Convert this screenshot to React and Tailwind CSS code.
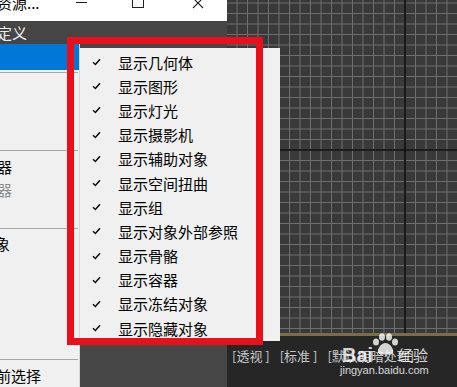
import React from 'react';

const cjk = { fontFamily: '"Noto Sans CJK SC", "Liberation Sans", sans-serif' };

const items = [
  '显示几何体',
  '显示图形',
  '显示灯光',
  '显示摄影机',
  '显示辅助对象',
  '显示空间扭曲',
  '显示组',
  '显示对象外部参照',
  '显示骨骼',
  '显示容器',
  '显示冻结对象',
  '显示隐藏对象',
];

function Check() {
  return (
    <svg width="9" height="8" viewBox="0 0 9 8" className="shrink-0">
      <path d="M1 4.2 L3.4 6.5 L8 1.2" fill="none" stroke="#000" strokeWidth="1.4" />
    </svg>
  );
}

function Grid() {
  // viewport grid, axes at (178, 150), spacing ~10.5px
  const w = 230;
  const h = 333;
  const step = 10.5;
  const xs = [];
  const ys = [];
  for (let k = -20; k <= 20; k++) {
    const x = 178 + k * step;
    if (x >= 0 && x <= w) xs.push(x);
  }
  for (let k = -20; k <= 20; k++) {
    const y = 150 + k * step;
    if (y >= 0 && y <= h) ys.push(y);
  }
  return (
    <svg width={w} height={h} className="block">
      <rect width={w} height={h} fill="#3a3a3a" />
      {xs.map((x) => (
        <line key={'x' + x} x1={x} y1="0" x2={x} y2={h} stroke="#6e6e6e" strokeWidth="1" />
      ))}
      {ys.map((y) => (
        <line key={'y' + y} x1="0" y1={y} x2={w} y2={y} stroke="#6e6e6e" strokeWidth="1" />
      ))}
      <line x1="178" y1="0" x2="178" y2={h} stroke="#0a0a0a" strokeWidth="1.6" />
      <line x1="0" y1="150" x2={w} y2="150" stroke="#0a0a0a" strokeWidth="1.6" />
    </svg>
  );
}

function Paw() {
  return (
    <svg width="27" height="23" viewBox="0 0 27 23">
      <g fill="#fff" fillOpacity="0.8">
        <ellipse cx="4" cy="9" rx="3" ry="3.6" />
        <ellipse cx="10" cy="4" rx="3" ry="3.8" />
        <ellipse cx="17" cy="4" rx="3" ry="3.8" />
        <ellipse cx="23" cy="9" rx="3" ry="3.6" />
        <path d="M13.5 10 C9 10 5 16 6 19.5 C7 22.5 11 21.5 13.5 21.5 C16 21.5 20 22.5 21 19.5 C22 16 18 10 13.5 10 Z" />
      </g>
    </svg>
  );
}

export default function App() {
  return (
    <div className="relative w-[457px] h-[387px] overflow-hidden bg-[#262626] flex" style={cjk}>
      {/* left: floating window */}
      <div className="w-[227px] flex flex-col shrink-0">
        <div className="h-[22px] bg-white relative flex items-start text-[15px] text-black">
          <span className="-ml-[3px] -mt-[7px] leading-[20px]">资源...</span>
          <span className="absolute left-[76px] top-[2px] w-[11px] h-px bg-[#222]"></span>
          <span className="absolute left-[132px] -top-[3px] w-[12px] h-[11px] border border-[#222]"></span>
          <svg className="absolute left-[192px] -top-[3px]" width="12" height="12" viewBox="0 0 12 12">
            <path d="M1 1 L11 11 M11 1 L1 11" stroke="#222" strokeWidth="1.1" />
          </svg>
        </div>
        <div className="h-[25px] bg-[#454545] text-[#eeeeee] text-[15px] flex items-center">
          <span className="-ml-[3px] mt-[1px]">定义</span>
        </div>
        <div className="flex-1 flex">
          <div className="w-[80px] bg-[#f0f0f0] border-r border-[#d8d8d8] flex flex-col text-[15px] text-black">
            <div className="h-[26px] bg-[#0078d7]"></div>
            <div className="h-[2px]"></div>
            <div className="h-px w-[78px] bg-[#a8a8a8]"></div>
            <div className="h-[77px]"></div>
            <div className="h-px w-[78px] bg-[#a8a8a8]"></div>
            <div className="h-[3px]"></div>
            <div className="h-[24px] flex items-center leading-none"><span className="-ml-[3px]">器</span></div>
            <div className="h-[23px] flex items-center leading-none text-[#8c8c8c]"><span className="-ml-[3px]">器</span></div>
            <div className="h-[27px]"></div>
            <div className="h-px w-[78px] bg-[#a8a8a8]"></div>
            <div className="h-[2px]"></div>
            <div className="h-[24px] flex items-center leading-none"><span className="-ml-[5px]">象</span></div>
            <div className="h-[104px]"></div>
            <div className="h-px w-[78px] bg-[#a8a8a8]"></div>
            <div className="h-[3px]"></div>
            <div className="h-[24px] flex items-center leading-none"><span className="-ml-[4px]">前选择</span></div>
          </div>
          <div className="flex-1 bg-[#474747]"></div>
        </div>
      </div>

      {/* right: viewport */}
      <div className="flex-1 flex flex-col">
        <Grid />
        <div className="h-[3px] bg-[#7a6e45]"></div>
        <div className="flex-1 bg-[#262626] flex gap-[10px] pl-[5px] pt-[12px] text-[13px] leading-[16px] text-[#c8c8c8] whitespace-nowrap">
          <span>[透视 ]</span>
          <span>[标准 ]</span>
          <span>[默认明暗处理]</span>
        </div>
      </div>

      {/* popup menu */}
      <div className="absolute left-[80px] top-[48px] w-[200px] h-[293px] bg-[#f0f0f0] pt-[2px]">
        {items.map((t) => (
          <div key={t} className="h-[24.2px] flex items-center text-[15px] text-black leading-none">
            <span className="ml-[12px] mr-[17px] flex"><Check /></span>
            <span>{t}</span>
          </div>
        ))}
      </div>

      {/* red annotation box */}
      <div className="absolute left-[67px] top-[37px] w-[196px] h-[308px] border-[7px] border-[#e8101a]"></div>

      {/* watermark */}
      <div className="absolute left-[340px] top-[333px] w-[95px] h-[45px] text-white/80">
        <div className="absolute left-[2px] top-[12px] text-[20px] font-bold leading-[20px]" style={{ fontFamily: '"Liberation Sans", sans-serif' }}>Bai</div>
        <div className="absolute left-[32px] top-0"><Paw /></div>
        <div className="absolute left-[58px] top-[12px] text-[15px] leading-[20px]">经验</div>
        <div className="absolute left-0 top-[31px] text-[11px] leading-[12px]" style={{ fontFamily: '"Liberation Sans", sans-serif' }}>jingyan.baidu.com</div>
      </div>
    </div>
  );
}
